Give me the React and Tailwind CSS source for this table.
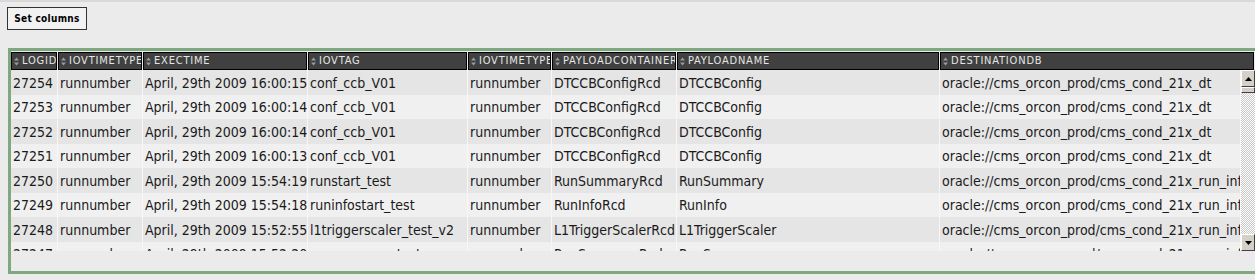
import React from "react";

const cols = [
  { name: "LOGID", w: "w-[47px]" },
  { name: "IOVTIMETYPE", w: "w-[85px]" },
  { name: "EXECTIME", w: "w-[165px]" },
  { name: "IOVTAG", w: "w-[160px]" },
  { name: "IOVTIMETYPE", w: "w-[84px]" },
  { name: "PAYLOADCONTAINER", w: "w-[125px]" },
  { name: "PAYLOADNAME", w: "w-[263px]" },
  { name: "DESTINATIONDB", w: "flex-1" },
];

const rows = [
  ["27254", "runnumber", "April, 29th 2009 16:00:15", "conf_ccb_V01", "runnumber", "DTCCBConfigRcd", "DTCCBConfig", "oracle://cms_orcon_prod/cms_cond_21x_dt"],
  ["27253", "runnumber", "April, 29th 2009 16:00:14", "conf_ccb_V01", "runnumber", "DTCCBConfigRcd", "DTCCBConfig", "oracle://cms_orcon_prod/cms_cond_21x_dt"],
  ["27252", "runnumber", "April, 29th 2009 16:00:14", "conf_ccb_V01", "runnumber", "DTCCBConfigRcd", "DTCCBConfig", "oracle://cms_orcon_prod/cms_cond_21x_dt"],
  ["27251", "runnumber", "April, 29th 2009 16:00:13", "conf_ccb_V01", "runnumber", "DTCCBConfigRcd", "DTCCBConfig", "oracle://cms_orcon_prod/cms_cond_21x_dt"],
  ["27250", "runnumber", "April, 29th 2009 15:54:19", "runstart_test", "runnumber", "RunSummaryRcd", "RunSummary", "oracle://cms_orcon_prod/cms_cond_21x_run_info"],
  ["27249", "runnumber", "April, 29th 2009 15:54:18", "runinfostart_test", "runnumber", "RunInfoRcd", "RunInfo", "oracle://cms_orcon_prod/cms_cond_21x_run_info"],
  ["27248", "runnumber", "April, 29th 2009 15:52:55", "l1triggerscaler_test_v2", "runnumber", "L1TriggerScalerRcd", "L1TriggerScaler", "oracle://cms_orcon_prod/cms_cond_21x_run_info"],
  ["27247", "runnumber", "April, 29th 2009 15:52:20", "runsummary_test", "runnumber", "RunSummaryRcd", "RunSummary", "oracle://cms_orcon_prod/cms_cond_21x_run_info"],
];

function SortIcon() {
  return (
    <svg width="5" height="9" viewBox="0 0 5 9" className="mr-[3px] shrink-0">
      <path d="M2.5 0.5 L5 3.6 L0 3.6 Z" fill="#9a9a9a" />
      <path d="M2.5 8.5 L5 5.4 L0 5.4 Z" fill="#9a9a9a" />
    </svg>
  );
}

function Arrow({ up }) {
  return (
    <div className="h-[17px] bg-[#d4d0c8] border border-t-white border-l-white border-r-[#404040] border-b-[#404040] flex items-center justify-center">
      <svg width="7" height="4" viewBox="0 0 7 4">
        {up ? <path d="M3.5 0 L7 4 L0 4 Z" fill="#000" /> : <path d="M0 0 L7 0 L3.5 4 Z" fill="#000" />}
      </svg>
    </div>
  );
}

export default function App() {
  return (
    <div className="w-[1255px] h-[280px] bg-[#ebebeb] border-t-2 border-[#d9d9d9] overflow-hidden text-[#1a1a1a] font-[family-name:DejaVu_Sans_Condensed,DejaVu_Sans,sans-serif]">
      <div className="flex pl-[7px] pt-[5px]">
        <button className="h-[23px] w-[80px] border border-[#333] bg-[#f2f2f2] text-[10px] font-bold text-black tracking-[0.3px]">
          Set columns
        </button>
      </div>

      <div className="mt-[18px] ml-[8px] h-[226px] border-[3px] border-r-0 border-[#80a880] bg-[#ebebeb] pt-[1px]">
        <div className="flex h-[18px]">
          {cols.map((c, i) => (
            <div key={i} className={`${c.w} shrink-0 pr-[1px]`}>
              <div className="h-full bg-[#404040] border border-black flex items-center pl-[2px] overflow-hidden whitespace-nowrap text-[11px] tracking-[0.8px] text-[#e6e6e6]">
                <SortIcon />
                {c.name}
              </div>
            </div>
          ))}
        </div>

        <div className="flex h-[181px] overflow-hidden">
          <div className="flex-1 overflow-hidden">
            {rows.map((r, i) => (
              <div
                key={i}
                className={`flex h-[24.5px] ${i % 2 === 0 ? "bg-[#e5e5e5]" : "bg-[#f0f0f0]"}`}
              >
                {r.map((v, j) => (
                  <div
                    key={j}
                    className={`${cols[j].w} shrink-0 border-r border-[#f7f7f7] pl-[2px] pt-[2px] flex items-center overflow-hidden whitespace-nowrap text-[14px]`}
                  >
                    {v}
                  </div>
                ))}
              </div>
            ))}
          </div>
          <div className="w-[14px] flex flex-col">
            <Arrow up />
            <div className="h-[6px] bg-[#d4d0c8] border border-t-white border-l-white border-r-[#404040] border-b-[#404040]" />
            <div className="flex-1 bg-[repeating-conic-gradient(#c8c8c8_0_25%,#ffffff_0_50%)] bg-size-[2px_2px]" />
            <Arrow />
          </div>
        </div>
      </div>
    </div>
  );
}
